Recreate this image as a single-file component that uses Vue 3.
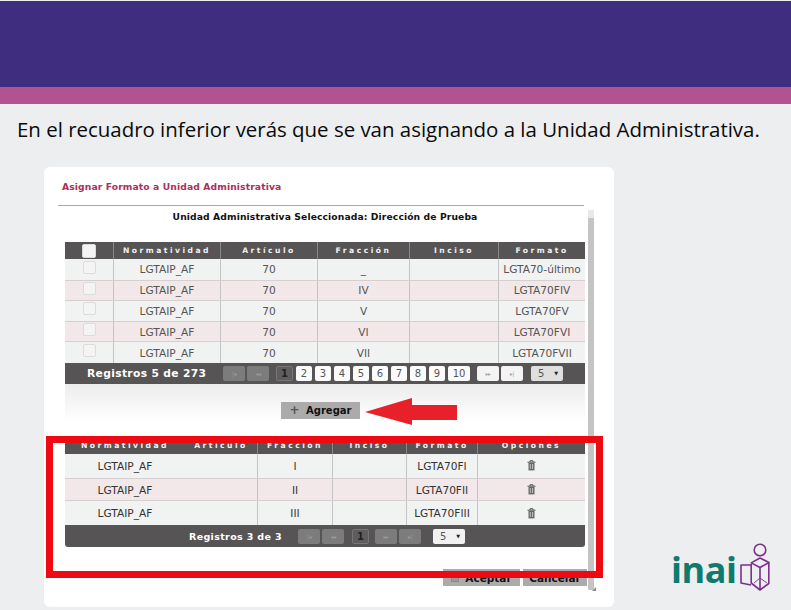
<script setup>
const topRows = [
  ['LGTAIP_AF', '70', '_', '', 'LGTA70-último'],
  ['LGTAIP_AF', '70', 'IV', '', 'LGTA70FIV'],
  ['LGTAIP_AF', '70', 'V', '', 'LGTA70FV'],
  ['LGTAIP_AF', '70', 'VI', '', 'LGTA70FVI'],
  ['LGTAIP_AF', '70', 'VII', '', 'LGTA70FVII']
]
const bottomRows = [
  ['LGTAIP_AF', '', 'I', '', 'LGTA70FI'],
  ['LGTAIP_AF', '', 'II', '', 'LGTA70FII'],
  ['LGTAIP_AF', '', 'III', '', 'LGTA70FIII']
]
const pages = [2, 3, 4, 5, 6, 7, 8, 9, 10]
</script>

<template>
  <div class="slide">
    <div class="band-purple"></div>
    <div class="band-pink"></div>
    <p class="lead">En el recuadro inferior verás que se van asignando a la Unidad Administrativa.</p>

    <div class="slide-body">
      <section class="card">
        <h2 class="card-title">Asignar Formato a Unidad Administrativa</h2>
        <div class="card-main">
          <div class="content">
            <h3 class="unit">Unidad Administrativa Seleccionada: Dirección de Prueba</h3>

            <div class="table">
              <div class="row head cols-top">
                <span class="cell"><i class="check check-head"></i></span>
                <span class="cell">Normatividad</span>
                <span class="cell">Artículo</span>
                <span class="cell">Fracción</span>
                <span class="cell">Inciso</span>
                <span class="cell">Formato</span>
              </div>
              <div v-for="(row, i) in topRows" :key="i" class="row body cols-top" :class="{ alt: i % 2 === 1 }">
                <span class="cell"><i class="check"></i></span>
                <span v-for="(val, j) in row" :key="j" class="cell">{{ val }}</span>
              </div>
              <div class="pager">
                <span class="total total-top">Registros 5 de 273</span>
                <span class="pg off wide"><em>|◂</em></span>
                <span class="pg off wide"><em>◂◂</em></span>
                <span class="pg current first">1</span>
                <span v-for="p in pages" :key="p" class="pg" :class="{ ten: p === 10 }">{{ p }}</span>
                <span class="pg next wide"><em>▸▸</em></span>
                <span class="pg next wide"><em>▸|</em></span>
                <span class="size">5 <b>▼</b></span>
              </div>
            </div>

            <div class="add-area">
              <button class="add-btn"><span class="plus">+</span> Agregar</button>
              <svg class="arrow" width="92" height="27" viewBox="0 0 92 27">
                <polygon points="0,14 47,0 47,7 92,7 92,22 47,22 47,27" fill="#e8202a" />
              </svg>
            </div>

            <div class="table second">
              <div class="row head cols-bottom">
                <span class="cell plain">Normatividad</span>
                <span class="cell plain-end">Artículo</span>
                <span class="cell">Fracción</span>
                <span class="cell">Inciso</span>
                <span class="cell">Formato</span>
                <span class="cell">Opciones</span>
              </div>
              <div v-for="(row, i) in bottomRows" :key="i" class="row body tall cols-bottom" :class="{ alt: i % 2 === 1 }">
                <span v-for="(val, j) in row" :key="j" class="cell" :class="{ plain: j < 1 }">{{ val }}</span>
                <span class="cell">
                  <svg class="trash" width="9" height="11" viewBox="0 0 9 11">
                    <path d="M0.5 2.2h8M3 2V0.8h3V2" fill="none" stroke="#555" stroke-width="1" />
                    <path d="M1.5 3h6v7.4h-6z" fill="#666" />
                    <path d="M3.3 4v5M5.6 4v5" stroke="#ddd" stroke-width="0.8" />
                  </svg>
                </span>
              </div>
              <div class="pager pager-bottom">
                <span class="total total-bottom">Registros 3 de 3</span>
                <span class="pg off wide"><em>|◂</em></span>
                <span class="pg off wide"><em>◂◂</em></span>
                <span class="pg current second-current">1</span>
                <span class="pg off wide"><em>▸▸</em></span>
                <span class="pg off wide"><em>▸|</em></span>
                <span class="size size-bottom">5 <b>▼</b></span>
              </div>
            </div>

            <div class="actions">
              <button class="act act-ok"><i class="act-box"></i>Aceptar</button>
              <button class="act act-cancel">Cancelar</button>
            </div>
          </div>
          <div class="scrollbar"><i class="scroll-up"></i><i class="scroll-thumb"></i></div>
        </div>
        <i class="resize"></i>
        <div class="red-frame"></div>
      </section>

      <div class="logo">
        <span class="logo-word">inai</span>
        <svg class="logo-mark" width="34" height="50" viewBox="0 0 34 50" fill="none" stroke="#7d2f8e" stroke-width="1.6" stroke-linejoin="round">
          <circle cx="20" cy="8" r="5.8" />
          <path d="M20 16l9 4.5-9 5-8.8-4.6z" />
          <path d="M11.2 22v19l8.8 7 8.8-6.5V20.6M20 25.5V48" />
          <path d="M11 23H1v18l10 2" />
          <path d="M14 41l6-5 7 5" stroke-width="0.9" />
        </svg>
      </div>
    </div>
  </div>
</template>

<style>
html, body {
  margin: 0;
  height: 610px;
  overflow: hidden;
  background: #eceef0;
}
</style>

<style scoped>
.slide {
  width: 791px;
  height: 610px;
  background: #eceef0;
  display: flex;
  flex-direction: column;
  font-family: "DejaVu Sans", Verdana, sans-serif;
  overflow: hidden;
}
.band-purple {
  height: 86px;
  margin-top: 1px;
  background: #3f2e7f;
}
.band-pink {
  height: 17px;
  background: #b25290;
}
.lead {
  margin: 12px 0 0 17px;
  height: 26px;
  font: 400 20.46px/26px "Open Sans", sans-serif;
  color: #0a0a0a;
  white-space: nowrap;
}
.slide-body {
  display: flex;
  margin: 25px 0 0 44px;
}
.card {
  position: relative;
  width: 570px;
  height: 440px;
  box-sizing: border-box;
  padding-top: 14px;
  background: #fff;
  border-radius: 6px;
}
.card-title {
  margin: 0 0 0 18px;
  height: 24px;
  font-size: 9.2px;
  font-weight: 700;
  line-height: 12px;
  color: #a8305e;
  letter-spacing: 0.12px;
}
.card-main {
  display: flex;
  width: 526px;
  margin-left: 14px;
  border-top: 1px solid #c79bb0;
}
.content {
  width: 530px;
  flex: none;
}
.unit {
  margin: 5px 0 0 7px;
  width: 520px;
  height: 31px;
  font-size: 9.2px;
  font-weight: 700;
  line-height: 12px;
  letter-spacing: 0.11px;
  text-align: center;
  color: #111;
}
.table {
  width: 520px;
  margin-left: 7px;
}
.row {
  display: grid;
}
.cols-top {
  grid-template-columns: 49px 107px 97px 92px 89px 86px;
}
.cols-bottom {
  grid-template-columns: 120px 73px 75px 74px 71px 107px;
}
.cell {
  display: flex;
  align-items: center;
  justify-content: center;
  box-sizing: border-box;
  border-right: 1px solid #c4c4c4;
  white-space: nowrap;
  min-width: 0;
}
.cell:last-child,
.cell.plain {
  border-right: none;
}
.head {
  height: 17px;
  background: #565454;
  color: #f0f0f0;
  font-size: 7.6px;
  font-weight: 700;
  letter-spacing: 2.5px;
}
.head .cell {
  border-right-color: #888;
}
.body {
  height: 20.8px;
  box-sizing: border-box;
  background: #f1f2f2;
  color: #555;
  font-size: 10.6px;
}
.body.alt {
  background: #f2e8e9;
  border-top: 1px solid #d6cfd0;
  border-bottom: 1px solid #d6cfd0;
}
.body.tall {
  height: 23.7px;
  color: #333;
}
.check {
  display: block;
  width: 13px;
  height: 13px;
  box-sizing: border-box;
  margin-top: -4px;
  background: #f4f4f4;
  border: 1px solid #dcdcdc;
  border-radius: 2px;
}
.check-head {
  width: 14px;
  height: 14px;
  margin-top: 0;
}
.pager {
  display: flex;
  align-items: center;
  height: 21px;
  background: #565454;
  color: #fff;
}
.pager-bottom {
  height: 22px;
  border-radius: 0 0 3px 3px;
}
.total {
  font-size: 10.7px;
  font-weight: 700;
  letter-spacing: 0.35px;
  white-space: nowrap;
}
.total-top {
  width: 158px;
  padding-left: 22px;
  box-sizing: border-box;
}
.total-bottom {
  width: 233px;
  padding-left: 124px;
  box-sizing: border-box;
  font-size: 9.5px;
}
.pg {
  display: flex;
  align-items: center;
  justify-content: center;
  width: 16px;
  height: 15px;
  margin-right: 3px;
  background: #fbfbfb;
  border-radius: 2px;
  color: #555;
  font-size: 10px;
}
.pg em {
  font-style: normal;
  font-size: 6px;
  letter-spacing: -0.5px;
}
.wide {
  width: 22px;
  margin-right: 2px;
}
.off {
  background: #7d7c7c;
  color: #999;
}
.next {
  background: #f4f4f4;
  color: #aaa;
}
.current {
  width: 17px;
  background: #5f5d5d;
  border: 1px solid #777;
  box-sizing: border-box;
  color: #222;
  font-weight: 700;
}
.first {
  margin-left: 5px;
}
.second-current {
  margin-left: 6px;
  margin-right: 6px;
}
.ten {
  width: 22px;
  margin-right: 7px;
}
.size {
  display: flex;
  align-items: center;
  justify-content: space-between;
  box-sizing: border-box;
  width: 32px;
  height: 15px;
  margin-left: 6px;
  padding: 0 5px 0 7px;
  background: #dfdfdf;
  color: #555;
  font-size: 10px;
  border-radius: 2px;
}
.size b {
  font-size: 5px;
  color: #222;
}
.size-bottom {
  margin-left: 10px;
  background: #f1f1f1;
}
.add-area {
  display: flex;
  align-items: center;
  gap: 5px;
  box-sizing: border-box;
  height: 53px;
  margin-left: 7px;
  width: 520px;
  padding: 1px 0 0 216px;
  background: linear-gradient(#ececec, #fff 70%);
}
.add-btn {
  width: 79px;
  height: 17px;
  padding: 0;
  border: none;
  background: #ababab;
  color: #111;
  font: 700 10px "DejaVu Sans", sans-serif;
}
.plus {
  margin-right: 3px;
  font-size: 12px;
  line-height: 10px;
  color: #555;
}
.arrow {
  display: block;
  margin-top: 1px;
}
.second {
  border-radius: 0 0 3px 3px;
}
.actions {
  display: flex;
  gap: 3px;
  margin: 22px 0 0 385px;
}
.act {
  display: flex;
  align-items: center;
  justify-content: center;
  height: 17px;
  padding: 0;
  border: none;
  background: #ababab;
  color: #111;
  font: 700 10.5px "DejaVu Sans", sans-serif;
}
.act-box {
  width: 6px;
  height: 6px;
  margin-right: 6px;
  background: #999;
  border: 1px solid #8a8a8a;
}
.act-ok {
  width: 77px;
}
.act-cancel {
  width: 64px;
}
.scrollbar {
  flex: none;
  width: 6px;
  margin-top: 4px;
  display: flex;
  flex-direction: column;
}
.scroll-up {
  height: 8px;
  background: #e8e8e8;
}
.scroll-thumb {
  height: 372px;
  background: #c4c4c4;
}
.resize {
  position: absolute;
  left: 548px;
  top: 420px;
  width: 0;
  height: 0;
  border-left: 4px solid transparent;
  border-bottom: 4px solid #8a8a8a;
}
.red-frame {
  position: absolute;
  left: 2px;
  top: 269px;
  width: 557px;
  height: 142px;
  box-sizing: border-box;
  border: 7px solid #ee0a12;
}
.logo {
  display: flex;
  align-items: flex-end;
  align-self: flex-end;
  margin: 0 0 15px 57px;
}
.logo-word {
  margin-bottom: 3px;
  font: 700 36px/38px "Open Sans", sans-serif;
  color: #0f7a6e;
  letter-spacing: -0.5px;
}
.logo-mark {
  display: block;
  margin-left: 4px;
}
</style>
